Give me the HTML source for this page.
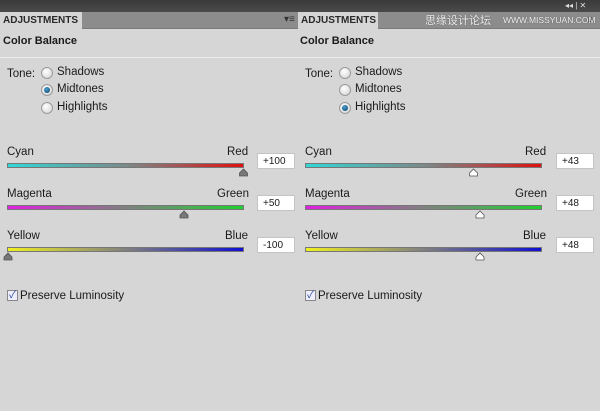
<!DOCTYPE html>
<html><head><meta charset="utf-8"><style>
*{margin:0;padding:0;box-sizing:border-box}
body{width:600px;height:411px;background:#d6d6d6;position:relative;overflow:hidden;font-family:"Liberation Sans","Noto Sans CJK SC",sans-serif;font-size:11.5px;color:#1a1a1a}
.a{position:absolute}
.top{left:0;top:0;width:600px;height:12px;background:linear-gradient(#3a3a3a,#4a4a4a)}
.tabrow{top:12px;height:17px;background:#8c8c8c;border-bottom:1px solid #7a7a7a}
.tab{top:12px;height:17px;background:#d6d6d6;font-weight:bold;font-size:10px;padding:3px 0 0 3px;color:#2a2a2a}
.title{font-weight:bold;font-size:11px}
.hr{height:1px;background:#a8a8a8;border-bottom:1px solid #ececec}
.radio{width:12px;height:12px;border-radius:50%;border:1px solid #9a9a9a;background:radial-gradient(circle at 40% 35%,#fff,#d0d0d0)}
.radio.on::after{content:"";position:absolute;left:2px;top:2px;width:6px;height:6px;border-radius:50%;background:radial-gradient(circle at 40% 35%,#4aa0d0,#0b3d66)}
.bar{height:5px;border:1px solid #777}
.box{width:38px;height:16px;background:#fff;border:1px solid #c4c4c4;padding:2px 0 0 5px;font-size:10px}
.cb{width:11px;height:11px;border:1px solid #888;background:#eef;color:#2a4a9a;font-size:10px;line-height:9px;text-align:center}
</style></head><body>
<div class="a top"></div>
<div class="a" style="left:565px;top:1px;color:#ddd;font-size:8px">◂◂ | ✕</div>
<div class="a tabrow" style="left:0;width:298px"></div>
<div class="a tabrow" style="left:298px;width:302px"></div>
<div class="a tab" style="left:0;width:82px">ADJUSTMENTS</div>
<div class="a tab" style="left:298px;width:80px">ADJUSTMENTS</div>
<div class="a" style="left:284px;top:14px;color:#333;font-size:10px">▾≡</div>
<div class="a" style="left:587px;top:15px;color:#333;font-size:10px">≡</div>
<div class="a" style="left:425px;top:12px;color:#eee;font-size:11px;text-shadow:0 0 1px #555">思缘设计论坛</div>
<div class="a" style="left:503px;top:15px;color:#eee;font-size:8.5px;text-shadow:0 0 1px #555">WWW.MISSYUAN.COM</div>

<div class="a title" style="left:3px;top:35px">Color Balance</div>
<div class="a title" style="left:300px;top:35px">Color Balance</div>
<div class="a hr" style="left:0;top:57px;width:600px"></div>

<div class="a" style="left:7px;top:68px">Tone:</div>
<div class="a radio" style="left:41px;top:67px"></div><div class="a" style="left:57px;top:66px">Shadows</div>
<div class="a radio on" style="left:41px;top:84px"></div><div class="a" style="left:57px;top:83px">Midtones</div>
<div class="a radio" style="left:41px;top:102px"></div><div class="a" style="left:57px;top:101px">Highlights</div>

<div class="a" style="left:305px;top:68px">Tone:</div>
<div class="a radio" style="left:339px;top:67px"></div><div class="a" style="left:355px;top:66px">Shadows</div>
<div class="a radio" style="left:339px;top:84px"></div><div class="a" style="left:355px;top:83px">Midtones</div>
<div class="a radio on" style="left:339px;top:102px"></div><div class="a" style="left:355px;top:101px">Highlights</div>

<div class="a" style="left:7px;top:146px">Cyan</div><div class="a" style="left:227px;top:146px">Red</div>
<div class="a bar" style="left:7px;top:163px;width:237px;background:linear-gradient(90deg,#30d8d8,#7a8a8a 50%,#e01010)"></div>
<div class="a box" style="left:257px;top:153px">+100</div>
<div class="a" style="left:7px;top:188px">Magenta</div><div class="a" style="left:217px;top:188px">Green</div>
<div class="a bar" style="left:7px;top:205px;width:237px;background:linear-gradient(90deg,#e020e0,#808080 50%,#20d030)"></div>
<div class="a box" style="left:257px;top:195px">+50</div>
<div class="a" style="left:7px;top:230px">Yellow</div><div class="a" style="left:225px;top:230px">Blue</div>
<div class="a bar" style="left:7px;top:247px;width:237px;background:linear-gradient(90deg,#f0f020,#808080 50%,#1010d0)"></div>
<div class="a box" style="left:257px;top:237px">-100</div>
<svg class="a" style="left:0;top:0" width="600" height="411">
<g fill="#777" stroke="#555" stroke-width="0.8">
<path d="M239.5 176 v-3 l4 -4 l4 4 v3 z"/>
<path d="M180 218 v-3 l4 -4 l4 4 v3 z"/>
<path d="M4 260 v-3 l4 -4 l4 4 v3 z"/>
</g>
<g fill="#fff" stroke="#555" stroke-width="0.8">
<path d="M469.5 176 v-3 l4 -4 l4 4 v3 z"/>
<path d="M476 218 v-3 l4 -4 l4 4 v3 z"/>
<path d="M476 260 v-3 l4 -4 l4 4 v3 z"/>
</g>
</svg>
<div class="a" style="left:305px;top:146px">Cyan</div><div class="a" style="left:525px;top:146px">Red</div>
<div class="a bar" style="left:305px;top:163px;width:237px;background:linear-gradient(90deg,#30d8d8,#7a8a8a 50%,#e01010)"></div>
<div class="a box" style="left:556px;top:153px">+43</div>
<div class="a" style="left:305px;top:188px">Magenta</div><div class="a" style="left:515px;top:188px">Green</div>
<div class="a bar" style="left:305px;top:205px;width:237px;background:linear-gradient(90deg,#e020e0,#808080 50%,#20d030)"></div>
<div class="a box" style="left:556px;top:195px">+48</div>
<div class="a" style="left:305px;top:230px">Yellow</div><div class="a" style="left:523px;top:230px">Blue</div>
<div class="a bar" style="left:305px;top:247px;width:237px;background:linear-gradient(90deg,#f0f020,#808080 50%,#1010d0)"></div>
<div class="a box" style="left:556px;top:237px">+48</div>

<div class="a cb" style="left:7px;top:290px">✓</div><div class="a" style="left:20px;top:290px">Preserve Luminosity</div>
<div class="a cb" style="left:305px;top:290px">✓</div><div class="a" style="left:318px;top:290px">Preserve Luminosity</div>
</body></html>
